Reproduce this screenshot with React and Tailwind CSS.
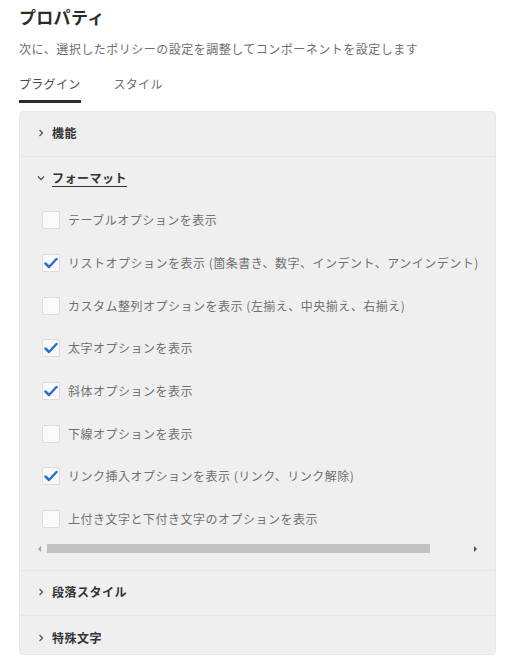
import { useState } from 'react';

const OPTIONS = [
    { label: "テーブルオプションを表示", checked: false },
    { label: "リストオプションを表示 (箇条書き、数字、インデント、アンインデント)", checked: true },
    { label: "カスタム整列オプションを表示 (左揃え、中央揃え、右揃え)", checked: false },
    { label: "太字オプションを表示", checked: true },
    { label: "斜体オプションを表示", checked: true },
    { label: "下線オプションを表示", checked: false },
    { label: "リンク挿入オプションを表示 (リンク、リンク解除)", checked: true },
    { label: "上付き文字と下付き文字のオプションを表示", checked: false },
];

const Chevron = ({ open }) => (
    <svg width="8" height="8" viewBox="0 0 8 8" className="shrink-0">
        {open ? (
            <path d="M1 2.5 L4 5.5 L7 2.5" fill="none" stroke="#555" strokeWidth="1.3" />
        ) : (
            <path d="M2.5 1 L5.5 4 L2.5 7" fill="none" stroke="#555" strokeWidth="1.3" />
        )}
    </svg>
);

const Check = () => (
    <svg width="14" height="12" viewBox="0 0 14 12">
        <path d="M1.5 6.5 L5 10 L12.5 2" fill="none" stroke="#2c6ed5" strokeWidth="2.5" strokeLinecap="round" strokeLinejoin="round" />
    </svg>
);

const SectionRow = ({ title, last }) => (
    <div className={`flex items-center gap-[7px] pl-[17px] ${last ? 'h-[38px] pt-[6px]' : 'h-[45px] pb-[2px] border-b border-[#e6e6e6]'}`}>
        <Chevron />
        <span className="text-[12px] font-bold text-[#333] tracking-[0.5px]">{title}</span>
    </div>
);

const App = () => {
    const [options, setOptions] = useState(OPTIONS);
    const [tab, setTab] = useState(0);

    const toggle = (i) => setOptions(options.map((o, j) => (j === i ? { ...o, checked: !o.checked } : o)));

    return (
        <div className="bg-white w-[525px] h-[660px] px-[19px] pt-[5px]" style={{ fontFamily: '"Noto Sans CJK JP", "Noto Sans", sans-serif' }}>
            <h1 className="text-[17px] font-bold text-[#2c2c2c] leading-[24px] tracking-[0.3px]">プロパティ</h1>
            <p className="mt-[11px] text-[12px] text-[#6e6e6e] leading-[18px] tracking-[0.5px]">次に、選択したポリシーの設定を調整してコンポーネントを設定します</p>

            <div className="flex gap-[33px] mt-[17px]">
                {['プラグイン', 'スタイル'].map((t, i) => (
                    <button
                        key={t}
                        onClick={() => setTab(i)}
                        className={`text-[12px] leading-[18px] pb-[7px] border-b-[3px] tracking-[0.3px] ${tab === i ? 'border-[#2c2c2c] text-[#4b4b4b]' : 'border-transparent text-[#6e6e6e]'}`}
                    >
                        {t}
                    </button>
                ))}
            </div>

            <div className="mt-[8px] w-[477px] bg-[#efefef] rounded-[4px] border border-[#e8e8e8]">
                <SectionRow title="機能" />

                <div className="border-b border-[#e6e6e6]">
                    <div className="flex items-center gap-[7px] pl-[17px] h-[42px]">
                        <Chevron open />
                        <span className="text-[12px] font-bold text-[#333] underline underline-offset-[3px] tracking-[0.5px]">フォーマット</span>
                    </div>
                    <div className="pl-[22px]">
                        {options.map((o, i) => (
                            <label key={i} className="flex items-center gap-[8px] h-[42.7px] cursor-pointer">
                                <span
                                    onClick={() => toggle(i)}
                                    className="w-[18px] h-[18px] bg-[#fafafa] border border-[#dcdcdc] rounded-[2px] flex items-center justify-center shrink-0"
                                >
                                    {o.checked && <Check />}
                                </span>
                                <span className="text-[12px] text-[#707070] whitespace-nowrap tracking-[0.5px]">{o.label}</span>
                            </label>
                        ))}
                    </div>
                    <div className="flex items-center h-[20px] mt-[-2px] mb-[11px] pl-[18px] pr-[18px]">
                        <span className="w-0 h-0 border-y-[3px] border-y-transparent border-r-[3px] border-r-[#a0a0a0]" />
                        <div className="ml-[6px] h-[9px] w-[383px] bg-[#c1c1c1]" />
                        <div className="flex-1" />
                        <span className="w-0 h-0 border-y-[3px] border-y-transparent border-l-[3px] border-l-[#505050]" />
                    </div>
                </div>

                <SectionRow title="段落スタイル" />
                <SectionRow title="特殊文字" last />
            </div>
        </div>
    );
};

export default App;
